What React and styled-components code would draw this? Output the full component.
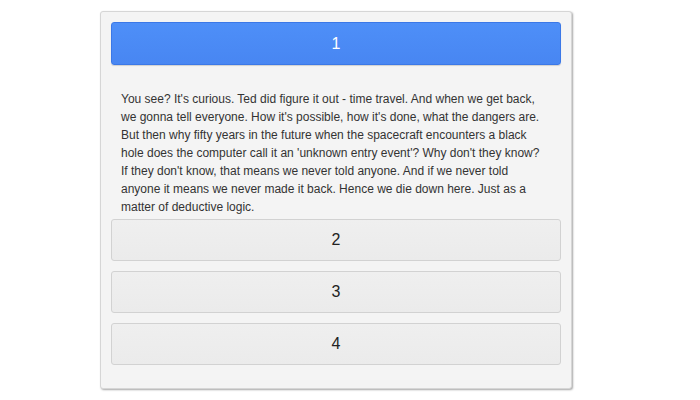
import React, { useState } from "react";
import styled, { createGlobalStyle } from "styled-components";

const Global = createGlobalStyle`
  html, body { margin: 0; padding: 0; background: #ffffff; }
  body { font-family: "Liberation Sans", Arial, sans-serif; }
`;

const Page = styled.div`
  width: 700px;
  height: 400px;
  padding-top: 11px;
  box-sizing: border-box;
  display: flex;
  justify-content: flex-start;
  padding-left: 100px;
`;

const Accordion = styled.div`
  width: 472px;
  height: 378px;
  box-sizing: border-box;
  background: #f4f4f4;
  border: 1px solid #d6d6d6;
  border-radius: 3px;
  box-shadow: 1px 1px 2px rgba(0, 0, 0, 0.35);
  padding: 10px 10px 0 10px;
  display: flex;
  flex-direction: column;
`;

const Header = styled.button`
  display: flex;
  align-items: center;
  justify-content: center;
  width: 450px;
  height: ${(p) => (p.$active ? 43 : 42)}px;
  box-sizing: border-box;
  margin: 0 0 ${(p) => (p.$gap ? 10 : 0)}px 0;
  padding: 0;
  border-radius: 3px;
  font-family: "Liberation Sans", Arial, sans-serif;
  font-size: 16px;
  cursor: pointer;
  border: 1px solid ${(p) => (p.$active ? "#3b78e7" : "#d2d2d2")};
  color: ${(p) => (p.$active ? "#ffffff" : "#222222")};
  background: ${(p) =>
    p.$active
      ? "linear-gradient(#4e8ff8, #4886f2)"
      : "linear-gradient(#efefef, #ebebeb)"};
  box-shadow: ${(p) => (p.$active ? "0 1px 1px rgba(0,0,0,0.15)" : "none")};
`;

const Panel = styled.div`
  padding: 25px 15px 3px 10px;
  font-size: 12px;
  line-height: 18px;
  color: #333333;
`;

const text =
  "You see? It's curious. Ted did figure it out - time travel. And when we get back, we gonna tell everyone. How it's possible, how it's done, what the dangers are. But then why fifty years in the future when the spacecraft encounters a black hole does the computer call it an 'unknown entry event'? Why don't they know? If they don't know, that means we never told anyone. And if we never told anyone it means we never made it back. Hence we die down here. Just as a matter of deductive logic.";

export default function App() {
  const [open, setOpen] = useState(0);
  const items = ["1", "2", "3", "4"];
  return (
    <>
      <Global />
      <Page>
        <Accordion>
          {items.map((label, i) => (
            <React.Fragment key={label}>
              <Header
                $active={open === i}
                $gap={open !== i}
                onClick={() => setOpen(i)}
              >
                {label}
              </Header>
              {open === i && <Panel>{text}</Panel>}
            </React.Fragment>
          ))}
        </Accordion>
      </Page>
    </>
  );
}
